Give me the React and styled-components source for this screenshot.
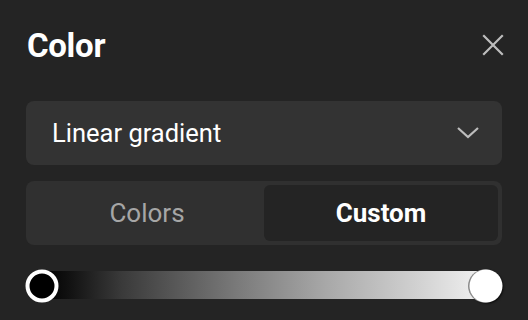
import React, { useState } from 'react'
import styled, { createGlobalStyle } from 'styled-components'

const GlobalStyle = createGlobalStyle`
  html, body {
    margin: 0;
    padding: 0;
    background: #242424;
  }
  body {
    font-family: Roboto, "Noto Sans", sans-serif;
    -webkit-font-smoothing: antialiased;
  }
`

const Panel = styled.div`
  width: 528px;
  height: 320px;
  box-sizing: border-box;
  padding: 22px 26px 0 26px;
  background: #242424;
  display: flex;
  flex-direction: column;
`

const Header = styled.div`
  display: flex;
  align-items: center;
  justify-content: space-between;
  height: 46px;
  margin-bottom: 33px;
`

const Title = styled.h1`
  margin: 0 0 0 1px;
  font-size: 33px;
  font-weight: 700;
  color: #ffffff;
  letter-spacing: -0.3px;
`

const CloseButton = styled.button`
  border: 0;
  background: none;
  padding: 0;
  width: 24px;
  height: 24px;
  margin-right: -3px;
  display: flex;
  align-items: center;
  justify-content: center;
  cursor: pointer;
`

const Select = styled.div`
  height: 64px;
  border-radius: 8px;
  background: #333333;
  display: flex;
  align-items: center;
  justify-content: space-between;
  padding: 0 22px 0 26px;
  box-sizing: border-box;
  margin-bottom: 16px;
`

const SelectLabel = styled.span`
  font-size: 25.5px;
  color: #ffffff;
`

const Segmented = styled.div`
  height: 64px;
  border-radius: 8px;
  background: #303030;
  padding: 4px;
  box-sizing: border-box;
  display: grid;
  grid-template-columns: 1fr 1fr;
  margin-bottom: 23px;
`

const Segment = styled.button`
  border: 0;
  border-radius: 6px;
  font-family: inherit;
  font-size: 26px;
  font-weight: ${p => (p.$active ? 700 : 400)};
  color: ${p => (p.$active ? '#ffffff' : '#a6a6a6')};
  background: ${p => (p.$active ? '#242424' : 'transparent')};
  cursor: pointer;
`

const Slider = styled.div`
  position: relative;
  height: 34px;
  display: flex;
  align-items: center;
`

const Track = styled.div`
  height: 28px;
  width: 444px;
  margin-left: 16px;
  background: linear-gradient(to right, #000 0%, #111 6%, #3a3a3a 18%, #7a7a7a 44%, #a8a8a8 64%, #d0d0d0 84%, #f2f2f2 100%);
`

const Thumb = styled.div`
  position: absolute;
  top: calc(50% + 1px);
  width: 33px;
  height: 33px;
  border-radius: 50%;
  box-sizing: border-box;
  transform: translate(-50%, -50%);
  left: ${p => p.$pos};
  background: ${p => p.$fill};
  border: ${p => (p.$ring ? '4px solid #ffffff' : '0')};
  box-shadow: ${p => (p.$ring ? 'none' : '-1.5px 0 0.5px #8a8a8a, 1px 1px 2px rgba(0,0,0,0.7)')};
`

export default function App() {
  const [tab, setTab] = useState('custom')
  return (
    <>
      <GlobalStyle />
      <Panel>
        <Header>
          <Title>Color</Title>
          <CloseButton aria-label="Close">
            <svg width="22" height="22" viewBox="0 0 22 22">
              <path d="M2 2 L20 20 M20 2 L2 20" stroke="#bdbdbd" strokeWidth="2.2" strokeLinecap="square" />
            </svg>
          </CloseButton>
        </Header>
        <Select>
          <SelectLabel>Linear gradient</SelectLabel>
          <svg width="24" height="14" viewBox="0 0 24 14">
            <path d="M2 2 L12 11 L22 2" stroke="#bdbdbd" strokeWidth="2.2" fill="none" />
          </svg>
        </Select>
        <Segmented>
          <Segment $active={tab === 'colors'} onClick={() => setTab('colors')}>Colors</Segment>
          <Segment $active={tab === 'custom'} onClick={() => setTab('custom')}>Custom</Segment>
        </Segmented>
        <Slider>
          <Track />
          <Thumb $pos="16px" $fill="#000000" $ring />
          <Thumb $pos="459.5px" $fill="#ffffff" />
        </Slider>
      </Panel>
    </>
  )
}
